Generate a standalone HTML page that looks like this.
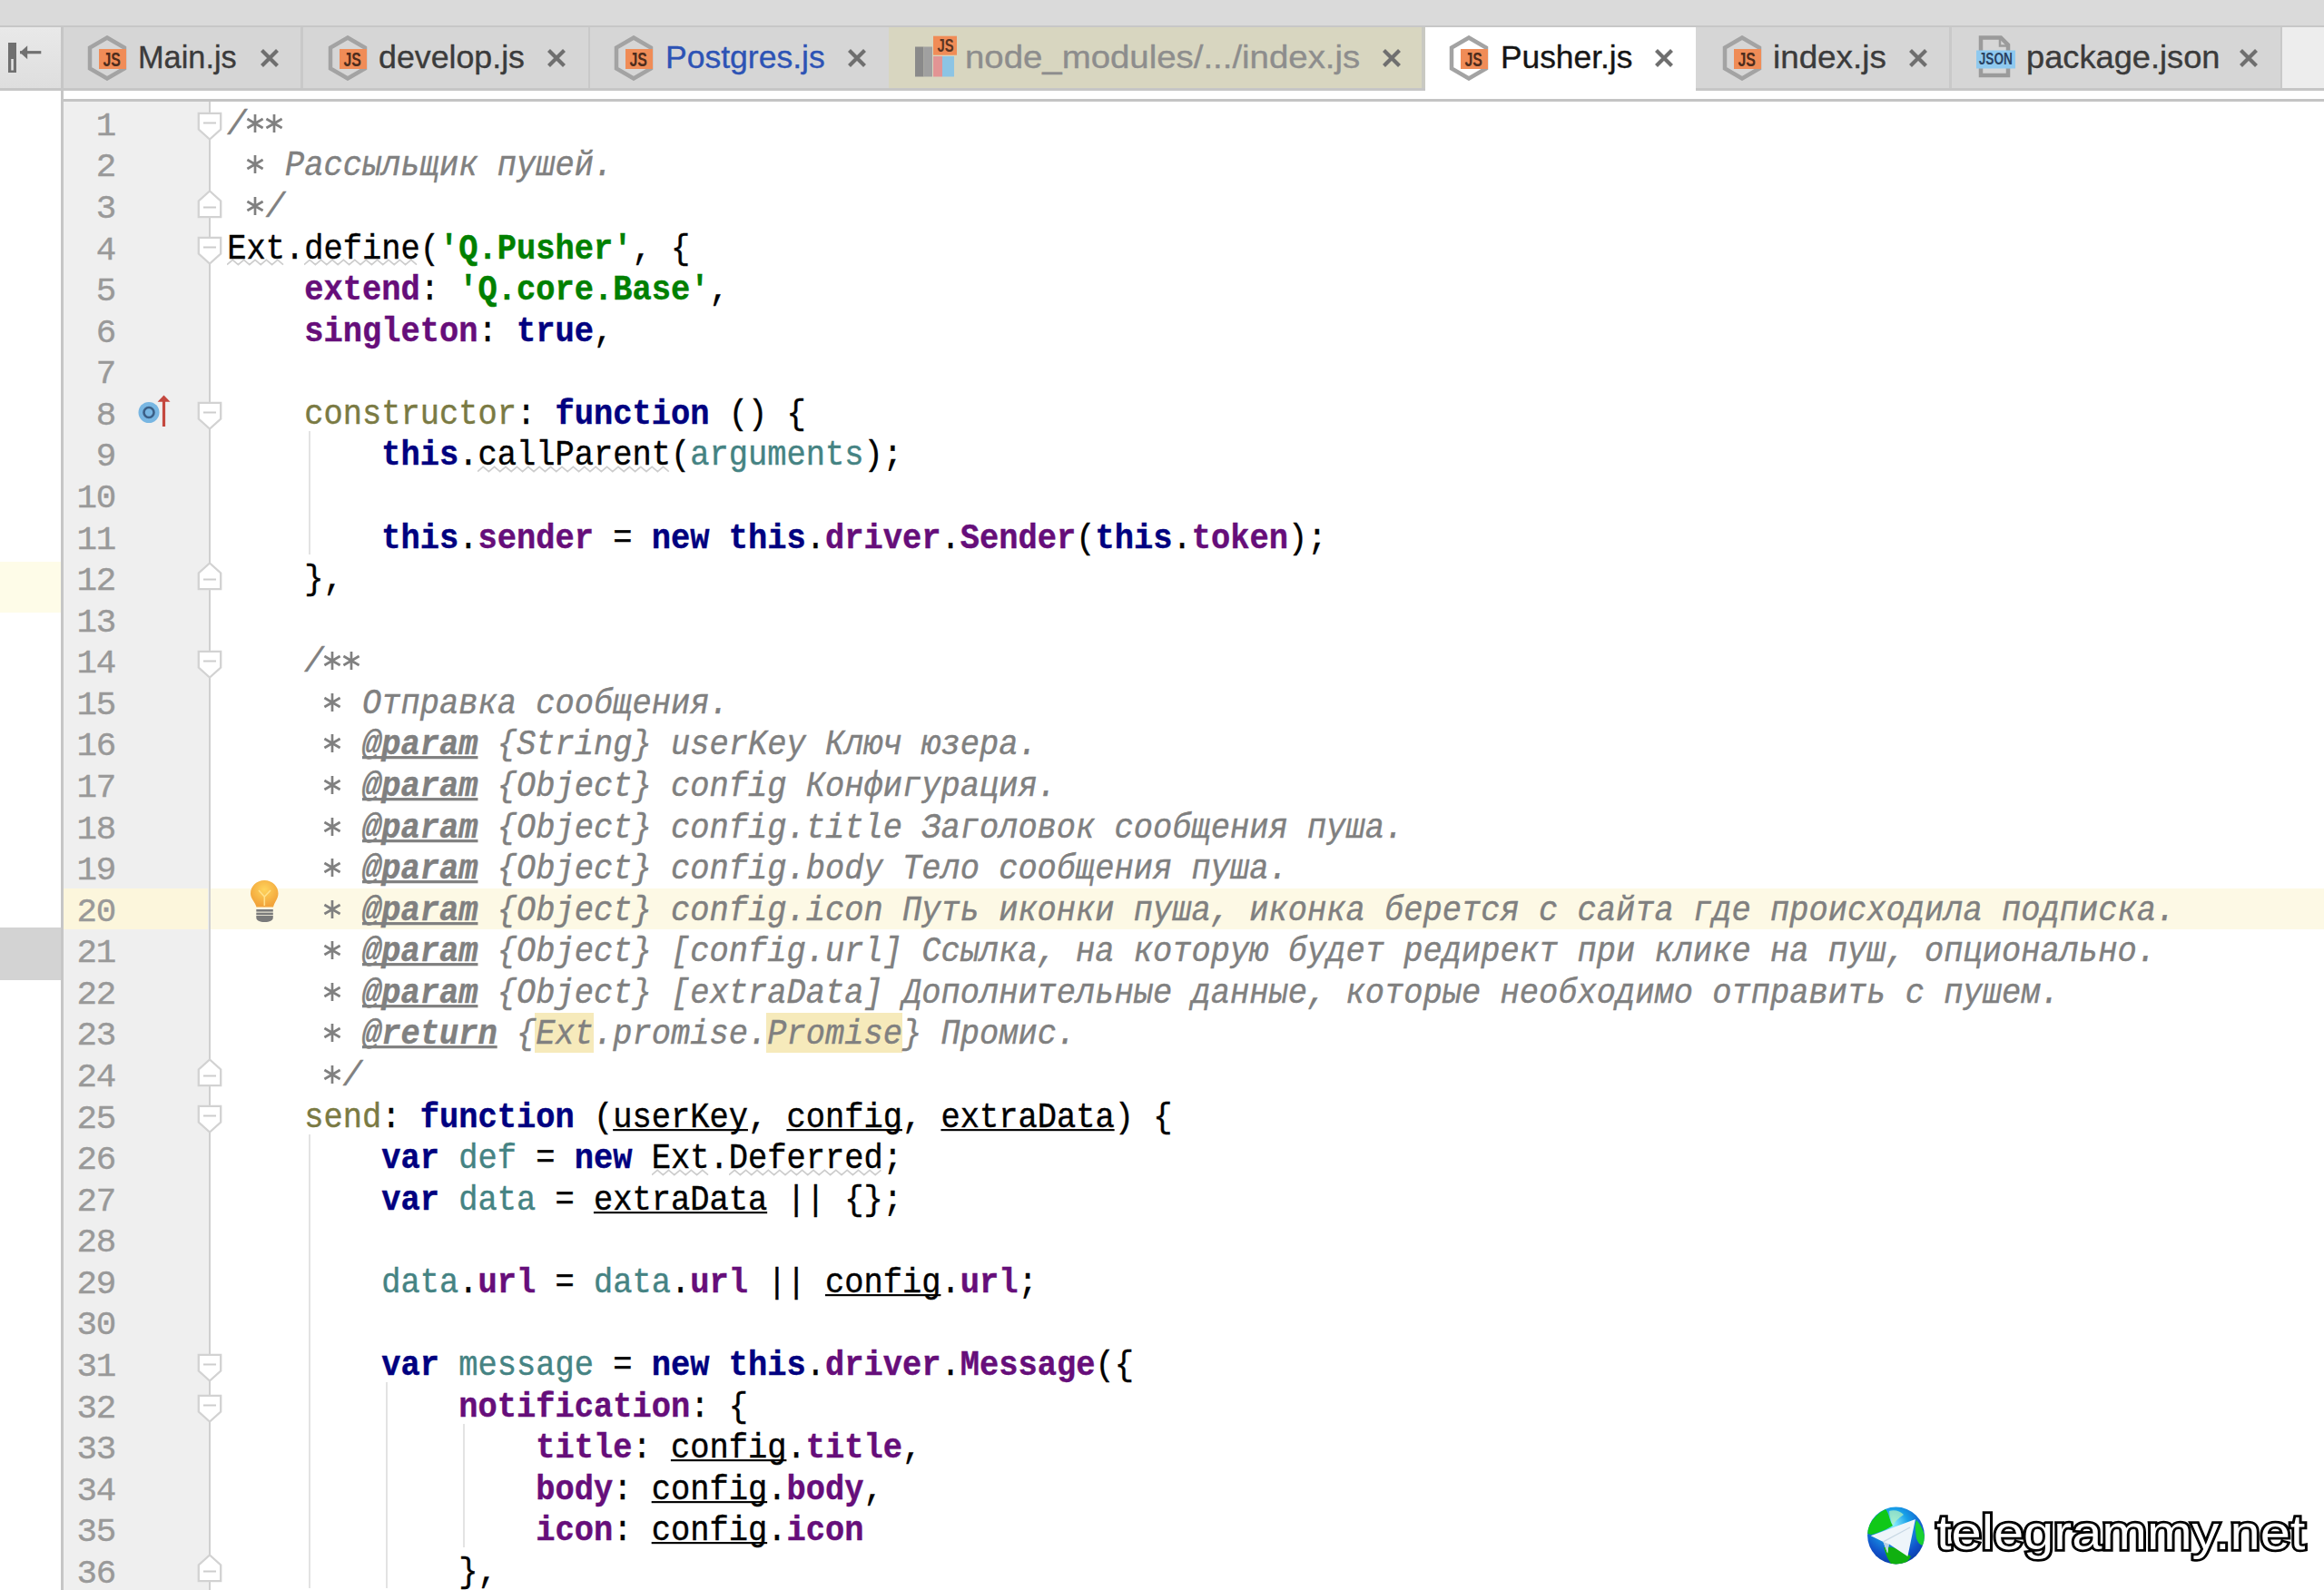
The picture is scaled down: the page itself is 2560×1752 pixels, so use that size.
<!DOCTYPE html><html><head><meta charset="utf-8"><title>Pusher.js</title><style>
*{margin:0;padding:0;box-sizing:border-box}
html,body{width:2560px;height:1752px;overflow:hidden;background:#fff}
body{position:relative;font-family:"Liberation Sans",sans-serif}
.a{position:absolute}
.ln{position:absolute;left:250.2px;height:45.57px;line-height:45.57px;font-family:"Liberation Mono",monospace;font-size:35.4px;letter-spacing:0.01px;white-space:pre;color:#000;transform-origin:0 32.3px;transform:scaleY(1.07);-webkit-text-stroke:0.4px currentColor}
.num{position:absolute;left:70px;width:57px;text-align:right;height:45.57px;line-height:45.57px;font-family:"Liberation Mono",monospace;font-size:37.5px;letter-spacing:-1.25px;color:#999;white-space:pre;-webkit-text-stroke:0.4px currentColor}
.c{color:#808080;font-style:italic}
.ct{color:#808080;font-style:italic;font-weight:bold;text-decoration:underline;text-decoration-thickness:2.5px;text-underline-offset:2.3px;text-decoration-skip-ink:none}
.s{color:#008000;font-weight:bold}
.k{color:#000080;font-weight:bold}
.p{color:#660e7a;font-weight:bold}
.f{color:#7a7a43}
.v{color:#458383}
.u{text-decoration:underline;text-decoration-thickness:2.4px;text-underline-offset:2.3px;text-decoration-skip-ink:none}
.tabt{position:absolute;top:29px;height:68px;line-height:68px;font-size:35px;white-space:pre;transform-origin:0 50%;-webkit-text-stroke:0.35px currentColor}
</style></head><body>
<div class="a" style="left:0;top:0;width:2560px;height:27.5px;background:#dadada"></div>
<div class="a" style="left:0;top:27.5px;width:2560px;height:2.5px;background:#c7c7c7"></div>
<div class="a" style="left:0;top:30px;width:2560px;height:67px;background:#d6d6d6"></div>
<div class="a" style="left:0;top:30px;width:67px;height:67px;background:linear-gradient(#e9e9e9,#dedede)"></div>
<div class="a" style="left:2514px;top:30px;width:46px;height:67px;background:#ededed"></div>
<div class="a" style="left:0;top:97px;width:2560px;height:3px;background:#c6c6c6"></div>
<div class="a" style="left:70px;top:109px;width:2490px;height:3px;background:#c4c4c4"></div>
<div class="a" style="left:67px;top:30px;width:3px;height:1722px;background:#c6c6c6"></div>
<div class="a" style="left:0;top:619px;width:67px;height:56px;background:#fefce8"></div>
<div class="a" style="left:0;top:1022px;width:67px;height:58px;background:#d3d3d3"></div>
<div class="a" style="left:70px;top:112px;width:159.5px;height:1640px;background:#efefef"></div>
<div class="a" style="left:70px;top:978.53px;width:158.5px;height:45.57px;background:#fcf6dc"></div>
<div class="a" style="left:232px;top:978.53px;width:2328px;height:45.57px;background:#fdf9e5"></div>
<div class="a" style="left:229.5px;top:112px;width:2.5px;height:1640px;background:#d0d0d0"></div>
<div class="a" style="left:331px;top:30px;width:2.5px;height:67px;background:#c9c9c9"></div>
<div class="a" style="left:647.5px;top:30px;width:2.5px;height:67px;background:#c9c9c9"></div>
<div class="a" style="left:2147px;top:30px;width:2.5px;height:67px;background:#c9c9c9"></div>
<div class="a" style="left:2511.5px;top:30px;width:2.5px;height:67px;background:#c9c9c9"></div>
<div class="a" style="left:979px;top:30px;width:591px;height:67px;background:#d8d6c0"></div>
<div class="a" style="left:1566px;top:30px;width:3.5px;height:67px;background:#c9c9c2"></div>
<div class="a" style="left:1569.5px;top:30px;width:298px;height:79px;background:#fff"></div>
<svg class="a" style="left:6px;top:44px" width="44" height="40" viewBox="0 0 44 40"><rect x="3" y="3" width="9" height="33" fill="#707070"/><rect x="6.3" y="21" width="2.5" height="12.5" fill="#e6e6e6"/><path d="M16 13.7 H39.3" stroke="#707070" stroke-width="3.2"/><path d="M16 13.7 L24.2 6.2 L24.2 21.2 Z" fill="#707070"/></svg>
<svg class="a" style="left:96.25px;top:38.5px" width="46" height="50" viewBox="0 0 46 50"><polygon points="22,2.5 41,13.5 41,36.5 22,47.5 3,36.5 3,13.5" fill="none" stroke="#a3a3a3" stroke-width="4.5"/><rect x="13" y="15" width="30" height="22" fill="#f08c57"/><text transform="translate(27.2 33.8) scale(0.74 1)" x="0" y="0" text-anchor="middle" font-family="Liberation Sans" font-weight="bold" font-size="21.5" fill="#4e2c1c">JS</text></svg>
<div class="tabt" style="left:152.25px;color:#3b3b3b;transform:scaleX(0.9805)">Main.js</div>
<svg class="a" style="left:286px;top:52.5px" width="22" height="22" viewBox="0 0 22 22"><path d="M2.5 2.5 L19.5 19.5 M19.5 2.5 L2.5 19.5" stroke="#6f6f6f" stroke-width="4.2" stroke-linecap="butt"/></svg>
<svg class="a" style="left:360.85px;top:38.5px" width="46" height="50" viewBox="0 0 46 50"><polygon points="22,2.5 41,13.5 41,36.5 22,47.5 3,36.5 3,13.5" fill="none" stroke="#a3a3a3" stroke-width="4.5"/><rect x="13" y="15" width="30" height="22" fill="#f08c57"/><text transform="translate(27.2 33.8) scale(0.74 1)" x="0" y="0" text-anchor="middle" font-family="Liberation Sans" font-weight="bold" font-size="21.5" fill="#4e2c1c">JS</text></svg>
<div class="tabt" style="left:416.97px;color:#3b3b3b;transform:scaleX(1.0213)">develop.js</div>
<svg class="a" style="left:602px;top:52.5px" width="22" height="22" viewBox="0 0 22 22"><path d="M2.5 2.5 L19.5 19.5 M19.5 2.5 L2.5 19.5" stroke="#6f6f6f" stroke-width="4.2" stroke-linecap="butt"/></svg>
<svg class="a" style="left:676.25px;top:38.5px" width="46" height="50" viewBox="0 0 46 50"><polygon points="22,2.5 41,13.5 41,36.5 22,47.5 3,36.5 3,13.5" fill="none" stroke="#a3a3a3" stroke-width="4.5"/><rect x="13" y="15" width="30" height="22" fill="#f08c57"/><text transform="translate(27.2 33.8) scale(0.74 1)" x="0" y="0" text-anchor="middle" font-family="Liberation Sans" font-weight="bold" font-size="21.5" fill="#4e2c1c">JS</text></svg>
<div class="tabt" style="left:732.96px;color:#2d53b5;transform:scaleX(1.0148)">Postgres.js</div>
<svg class="a" style="left:933px;top:52.5px" width="22" height="22" viewBox="0 0 22 22"><path d="M2.5 2.5 L19.5 19.5 M19.5 2.5 L2.5 19.5" stroke="#6f6f6f" stroke-width="4.2" stroke-linecap="butt"/></svg>
<div class="tabt" style="left:1062.96px;color:#8d8d8d;transform:scaleX(1.0965)">node_modules/.../index.js</div>
<svg class="a" style="left:1521.5px;top:52.5px" width="22" height="22" viewBox="0 0 22 22"><path d="M2.5 2.5 L19.5 19.5 M19.5 2.5 L2.5 19.5" stroke="#6f6f6f" stroke-width="4.2" stroke-linecap="butt"/></svg>
<svg class="a" style="left:1596.25px;top:38.5px" width="46" height="50" viewBox="0 0 46 50"><polygon points="22,2.5 41,13.5 41,36.5 22,47.5 3,36.5 3,13.5" fill="none" stroke="#a3a3a3" stroke-width="4.5"/><rect x="13" y="15" width="30" height="22" fill="#f08c57"/><text transform="translate(27.2 33.8) scale(0.74 1)" x="0" y="0" text-anchor="middle" font-family="Liberation Sans" font-weight="bold" font-size="21.5" fill="#4e2c1c">JS</text></svg>
<div class="tabt" style="left:1652.57px;color:#151515;transform:scaleX(1.0093)">Pusher.js</div>
<svg class="a" style="left:1822px;top:52.5px" width="22" height="22" viewBox="0 0 22 22"><path d="M2.5 2.5 L19.5 19.5 M19.5 2.5 L2.5 19.5" stroke="#6f6f6f" stroke-width="4.2" stroke-linecap="butt"/></svg>
<svg class="a" style="left:1896.85px;top:38.5px" width="46" height="50" viewBox="0 0 46 50"><polygon points="22,2.5 41,13.5 41,36.5 22,47.5 3,36.5 3,13.5" fill="none" stroke="#a3a3a3" stroke-width="4.5"/><rect x="13" y="15" width="30" height="22" fill="#f08c57"/><text transform="translate(27.2 33.8) scale(0.74 1)" x="0" y="0" text-anchor="middle" font-family="Liberation Sans" font-weight="bold" font-size="21.5" fill="#4e2c1c">JS</text></svg>
<div class="tabt" style="left:1953.09px;color:#3b3b3b;transform:scaleX(1.0517)">index.js</div>
<svg class="a" style="left:2102px;top:52.5px" width="22" height="22" viewBox="0 0 22 22"><path d="M2.5 2.5 L19.5 19.5 M19.5 2.5 L2.5 19.5" stroke="#6f6f6f" stroke-width="4.2" stroke-linecap="butt"/></svg>
<div class="tabt" style="left:2231.95px;color:#3b3b3b;transform:scaleX(1.0350)">package.json</div>
<svg class="a" style="left:2466px;top:52.5px" width="22" height="22" viewBox="0 0 22 22"><path d="M2.5 2.5 L19.5 19.5 M19.5 2.5 L2.5 19.5" stroke="#6f6f6f" stroke-width="4.2" stroke-linecap="butt"/></svg>
<svg class="a" style="left:1007px;top:39px" width="50" height="48" viewBox="0 0 50 48"><rect x="1" y="12.5" width="9.5" height="33" fill="#8a8a8a"/><rect x="10.5" y="12.5" width="9.5" height="33" fill="#a0a0a0"/><rect x="21" y="23" width="10" height="22.5" fill="#e29494"/><rect x="31" y="23" width="13" height="22.5" fill="#8cc4e4"/><rect x="21" y="0.7" width="26" height="21" fill="#f08c57"/><text transform="translate(34.5 17.8) scale(0.74 1)" text-anchor="middle" font-family="Liberation Sans" font-weight="bold" font-size="20" fill="#5a3422">JS</text></svg>
<svg class="a" style="left:2176px;top:39px" width="46" height="48" viewBox="0 0 46 48"><path d="M6 2.5 H28 L36 10.5 V44 H6 Z" fill="none" stroke="#9b9b9b" stroke-width="4.5"/><path d="M27 2 V11.5 H36" fill="none" stroke="#9b9b9b" stroke-width="2.5"/><rect x="1" y="16.5" width="43" height="20" fill="#8fc9ef"/><text transform="translate(22.3 32.3) scale(0.72 1)" text-anchor="middle" font-family="Liberation Sans" font-weight="bold" font-size="19" fill="#2a4262">JSON</text></svg>
<div class="num" style="top:116.90px">1</div>
<div class="num" style="top:162.47px">2</div>
<div class="num" style="top:208.04px">3</div>
<div class="num" style="top:253.61px">4</div>
<div class="num" style="top:299.18px">5</div>
<div class="num" style="top:344.75px">6</div>
<div class="num" style="top:390.32px">7</div>
<div class="num" style="top:435.89px">8</div>
<div class="num" style="top:481.46px">9</div>
<div class="num" style="top:527.03px">10</div>
<div class="num" style="top:572.60px">11</div>
<div class="num" style="top:618.17px">12</div>
<div class="num" style="top:663.74px">13</div>
<div class="num" style="top:709.31px">14</div>
<div class="num" style="top:754.88px">15</div>
<div class="num" style="top:800.45px">16</div>
<div class="num" style="top:846.02px">17</div>
<div class="num" style="top:891.59px">18</div>
<div class="num" style="top:937.16px">19</div>
<div class="num" style="top:982.73px">20</div>
<div class="num" style="top:1028.30px">21</div>
<div class="num" style="top:1073.87px">22</div>
<div class="num" style="top:1119.44px">23</div>
<div class="num" style="top:1165.01px">24</div>
<div class="num" style="top:1210.58px">25</div>
<div class="num" style="top:1256.15px">26</div>
<div class="num" style="top:1301.72px">27</div>
<div class="num" style="top:1347.29px">28</div>
<div class="num" style="top:1392.86px">29</div>
<div class="num" style="top:1438.43px">30</div>
<div class="num" style="top:1484.00px">31</div>
<div class="num" style="top:1529.57px">32</div>
<div class="num" style="top:1575.14px">33</div>
<div class="num" style="top:1620.71px">34</div>
<div class="num" style="top:1666.28px">35</div>
<div class="num" style="top:1711.85px">36</div>
<div class="a" style="left:339.99px;top:475.26px;width:2.5px;height:135.71px;background:#e3e3e3"></div>
<div class="a" style="left:339.99px;top:1249.95px;width:2.5px;height:500.27px;background:#e3e3e3"></div>
<div class="a" style="left:424.98px;top:1523.37px;width:2.5px;height:226.85px;background:#e3e3e3"></div>
<div class="a" style="left:509.98px;top:1568.94px;width:2.5px;height:135.71px;background:#e3e3e3"></div>
<div class="a" style="left:589.17px;top:1115.74px;width:64.74px;height:44.07px;background:#f6eabb"></div>
<div class="a" style="left:844.14px;top:1115.74px;width:149.74px;height:44.07px;background:#f6eabb"></div>
<svg class="a" style="left:217px;top:123.49px" width="28" height="33" viewBox="0 0 28 33"><path d="M1.8 1.8 H26.2 V19.5 L14 30.5 L1.8 19.5 Z" fill="#fff" stroke="#d2d2d2" stroke-width="2.3"/><path d="M7 12.5 H21" stroke="#cdcdcd" stroke-width="2"/></svg>
<svg class="a" style="left:217px;top:260.20px" width="28" height="33" viewBox="0 0 28 33"><path d="M1.8 1.8 H26.2 V19.5 L14 30.5 L1.8 19.5 Z" fill="#fff" stroke="#d2d2d2" stroke-width="2.3"/><path d="M7 12.5 H21" stroke="#cdcdcd" stroke-width="2"/></svg>
<svg class="a" style="left:217px;top:442.48px" width="28" height="33" viewBox="0 0 28 33"><path d="M1.8 1.8 H26.2 V19.5 L14 30.5 L1.8 19.5 Z" fill="#fff" stroke="#d2d2d2" stroke-width="2.3"/><path d="M7 12.5 H21" stroke="#cdcdcd" stroke-width="2"/></svg>
<svg class="a" style="left:217px;top:715.89px" width="28" height="33" viewBox="0 0 28 33"><path d="M1.8 1.8 H26.2 V19.5 L14 30.5 L1.8 19.5 Z" fill="#fff" stroke="#d2d2d2" stroke-width="2.3"/><path d="M7 12.5 H21" stroke="#cdcdcd" stroke-width="2"/></svg>
<svg class="a" style="left:217px;top:1217.17px" width="28" height="33" viewBox="0 0 28 33"><path d="M1.8 1.8 H26.2 V19.5 L14 30.5 L1.8 19.5 Z" fill="#fff" stroke="#d2d2d2" stroke-width="2.3"/><path d="M7 12.5 H21" stroke="#cdcdcd" stroke-width="2"/></svg>
<svg class="a" style="left:217px;top:1490.59px" width="28" height="33" viewBox="0 0 28 33"><path d="M1.8 1.8 H26.2 V19.5 L14 30.5 L1.8 19.5 Z" fill="#fff" stroke="#d2d2d2" stroke-width="2.3"/><path d="M7 12.5 H21" stroke="#cdcdcd" stroke-width="2"/></svg>
<svg class="a" style="left:217px;top:1536.16px" width="28" height="33" viewBox="0 0 28 33"><path d="M1.8 1.8 H26.2 V19.5 L14 30.5 L1.8 19.5 Z" fill="#fff" stroke="#d2d2d2" stroke-width="2.3"/><path d="M7 12.5 H21" stroke="#cdcdcd" stroke-width="2"/></svg>
<svg class="a" style="left:217px;top:207.62px" width="28" height="33" viewBox="0 0 28 33"><path d="M1.8 31.2 H26.2 V13.5 L14 2.5 L1.8 13.5 Z" fill="#fff" stroke="#d2d2d2" stroke-width="2.3"/><path d="M7 20.5 H21" stroke="#cdcdcd" stroke-width="2"/></svg>
<svg class="a" style="left:217px;top:617.75px" width="28" height="33" viewBox="0 0 28 33"><path d="M1.8 31.2 H26.2 V13.5 L14 2.5 L1.8 13.5 Z" fill="#fff" stroke="#d2d2d2" stroke-width="2.3"/><path d="M7 20.5 H21" stroke="#cdcdcd" stroke-width="2"/></svg>
<svg class="a" style="left:217px;top:1164.60px" width="28" height="33" viewBox="0 0 28 33"><path d="M1.8 31.2 H26.2 V13.5 L14 2.5 L1.8 13.5 Z" fill="#fff" stroke="#d2d2d2" stroke-width="2.3"/><path d="M7 20.5 H21" stroke="#cdcdcd" stroke-width="2"/></svg>
<svg class="a" style="left:217px;top:1711.44px" width="28" height="33" viewBox="0 0 28 33"><path d="M1.8 31.2 H26.2 V13.5 L14 2.5 L1.8 13.5 Z" fill="#fff" stroke="#d2d2d2" stroke-width="2.3"/><path d="M7 20.5 H21" stroke="#cdcdcd" stroke-width="2"/></svg>
<svg class="a" style="left:148px;top:432.48px" width="44" height="40" viewBox="0 0 44 40"><circle cx="16" cy="22.5" r="11.5" fill="#78b6e2"/><circle cx="16" cy="22.5" r="5.5" fill="none" stroke="#3c5f86" stroke-width="2.6"/><path d="M32.5 10 V38" stroke="#c4483f" stroke-width="3.2"/><path d="M25.6 10.7 L32.5 3.5 L39.5 10.7 Z" fill="#c4483f"/></svg>
<svg class="a" style="left:274px;top:968px" width="36" height="50" viewBox="0 0 36 50"><defs><radialGradient id="bulb" cx="0.5" cy="0.35" r="0.6"><stop offset="0" stop-color="#ffd45c"/><stop offset="1" stop-color="#f2a43a"/></radialGradient></defs><path d="M17.3 2 C26 2 32.5 8.5 32.5 16.5 C32.5 22.5 28.5 25.5 27 31.5 L8.5 31.5 C7 25.5 2 22.5 2 16.5 C2 8.5 8.5 2 17.3 2 Z" fill="url(#bulb)"/><path d="M11 13 L17.3 20 L24 13 M17.3 20 V30" stroke="#ffe08a" stroke-width="1.6" fill="none"/><rect x="8.3" y="34" width="18.5" height="2.6" fill="#7a7a7a"/><rect x="8.3" y="37.6" width="18.5" height="2.6" fill="#7a7a7a"/><path d="M8.3 41 H26.8 V43 C26.8 46.5 23 48 17.5 48 C12 48 8.3 46.5 8.3 43 Z" fill="#7a7a7a"/></svg>
<svg class="a" style="left:250.20px;top:285.21px" width="67.74" height="9"><polyline points="0.00,6.60 6.20,1.40 12.40,6.60 18.60,1.40 24.80,6.60 31.00,1.40 37.20,6.60 43.40,1.40 49.60,6.60 55.80,1.40 62.00,6.60" fill="none" stroke="#cdcdcd" stroke-width="1.7"/></svg>
<svg class="a" style="left:335.19px;top:285.21px" width="131.49" height="9"><polyline points="0.00,6.60 6.20,1.40 12.40,6.60 18.60,1.40 24.80,6.60 31.00,1.40 37.20,6.60 43.40,1.40 49.60,6.60 55.80,1.40 62.00,6.60 68.20,1.40 74.40,6.60 80.60,1.40 86.80,6.60 93.00,1.40 99.20,6.60 105.40,1.40 111.60,6.60 117.80,1.40 124.00,6.60" fill="none" stroke="#cdcdcd" stroke-width="1.7"/></svg>
<svg class="a" style="left:526.42px;top:513.06px" width="216.48" height="9"><polyline points="0.00,6.60 6.20,1.40 12.40,6.60 18.60,1.40 24.80,6.60 31.00,1.40 37.20,6.60 43.40,1.40 49.60,6.60 55.80,1.40 62.00,6.60 68.20,1.40 74.40,6.60 80.60,1.40 86.80,6.60 93.00,1.40 99.20,6.60 105.40,1.40 111.60,6.60 117.80,1.40 124.00,6.60 130.20,1.40 136.40,6.60 142.60,1.40 148.80,6.60 155.00,1.40 161.20,6.60 167.40,1.40 173.60,6.60 179.80,1.40 186.00,6.60 192.20,1.40 198.40,6.60 204.60,1.40 210.80,6.60" fill="none" stroke="#cdcdcd" stroke-width="1.7"/></svg>
<svg class="a" style="left:717.66px;top:1287.75px" width="67.74" height="9"><polyline points="0.00,6.60 6.20,1.40 12.40,6.60 18.60,1.40 24.80,6.60 31.00,1.40 37.20,6.60 43.40,1.40 49.60,6.60 55.80,1.40 62.00,6.60" fill="none" stroke="#cdcdcd" stroke-width="1.7"/></svg>
<svg class="a" style="left:802.65px;top:1287.75px" width="173.98" height="9"><polyline points="0.00,6.60 6.20,1.40 12.40,6.60 18.60,1.40 24.80,6.60 31.00,1.40 37.20,6.60 43.40,1.40 49.60,6.60 55.80,1.40 62.00,6.60 68.20,1.40 74.40,6.60 80.60,1.40 86.80,6.60 93.00,1.40 99.20,6.60 105.40,1.40 111.60,6.60 117.80,1.40 124.00,6.60 130.20,1.40 136.40,6.60 142.60,1.40 148.80,6.60 155.00,1.40 161.20,6.60 167.40,1.40" fill="none" stroke="#cdcdcd" stroke-width="1.7"/></svg>
<svg class="a" style="left:269.97px;top:124.90px" width="22" height="22" viewBox="-11 -11 22 22"><path d="M0 -10 V10 M-8.6 -5 L8.6 5 M-8.6 5 L8.6 -5" stroke="#808080" stroke-width="2.7"/></svg>
<svg class="a" style="left:291.22px;top:124.90px" width="22" height="22" viewBox="-11 -11 22 22"><path d="M0 -10 V10 M-8.6 -5 L8.6 5 M-8.6 5 L8.6 -5" stroke="#808080" stroke-width="2.7"/></svg>
<div class="ln" style="top:116.90px"><span class="c">/  </span></div>
<svg class="a" style="left:269.97px;top:170.47px" width="22" height="22" viewBox="-11 -11 22 22"><path d="M0 -10 V10 M-8.6 -5 L8.6 5 M-8.6 5 L8.6 -5" stroke="#808080" stroke-width="2.7"/></svg>
<div class="ln" style="top:162.47px"><span class="c">   Рассыльщик пушей.</span></div>
<svg class="a" style="left:269.97px;top:216.04px" width="22" height="22" viewBox="-11 -11 22 22"><path d="M0 -10 V10 M-8.6 -5 L8.6 5 M-8.6 5 L8.6 -5" stroke="#808080" stroke-width="2.7"/></svg>
<div class="ln" style="top:208.04px"><span class="c">  /</span></div>
<div class="ln" style="top:253.61px">Ext.define(<span class="s">&#x27;Q.Pusher&#x27;</span>, {</div>
<div class="ln" style="top:299.18px">    <span class="p">extend</span>: <span class="s">&#x27;Q.core.Base&#x27;</span>,</div>
<div class="ln" style="top:344.75px">    <span class="p">singleton</span>: <span class="k">true</span>,</div>
<div class="ln" style="top:435.89px">    <span class="f">constructor</span>: <span class="k">function</span> () {</div>
<div class="ln" style="top:481.46px">        <span class="k">this</span>.callParent(<span class="v">arguments</span>);</div>
<div class="ln" style="top:572.60px">        <span class="k">this</span>.<span class="p">sender</span> = <span class="k">new</span> <span class="k">this</span>.<span class="p">driver</span>.<span class="p">Sender</span>(<span class="k">this</span>.<span class="p">token</span>);</div>
<div class="ln" style="top:618.17px">    },</div>
<svg class="a" style="left:354.96px;top:717.31px" width="22" height="22" viewBox="-11 -11 22 22"><path d="M0 -10 V10 M-8.6 -5 L8.6 5 M-8.6 5 L8.6 -5" stroke="#808080" stroke-width="2.7"/></svg>
<svg class="a" style="left:376.21px;top:717.31px" width="22" height="22" viewBox="-11 -11 22 22"><path d="M0 -10 V10 M-8.6 -5 L8.6 5 M-8.6 5 L8.6 -5" stroke="#808080" stroke-width="2.7"/></svg>
<div class="ln" style="top:709.31px"><span class="c">    /  </span></div>
<svg class="a" style="left:354.96px;top:762.88px" width="22" height="22" viewBox="-11 -11 22 22"><path d="M0 -10 V10 M-8.6 -5 L8.6 5 M-8.6 5 L8.6 -5" stroke="#808080" stroke-width="2.7"/></svg>
<div class="ln" style="top:754.88px"><span class="c">       Отправка сообщения.</span></div>
<svg class="a" style="left:354.96px;top:808.45px" width="22" height="22" viewBox="-11 -11 22 22"><path d="M0 -10 V10 M-8.6 -5 L8.6 5 M-8.6 5 L8.6 -5" stroke="#808080" stroke-width="2.7"/></svg>
<div class="ln" style="top:800.45px"><span class="c">       </span><span class="ct">@param</span><span class="c"> {String} userKey Ключ юзера.</span></div>
<svg class="a" style="left:354.96px;top:854.02px" width="22" height="22" viewBox="-11 -11 22 22"><path d="M0 -10 V10 M-8.6 -5 L8.6 5 M-8.6 5 L8.6 -5" stroke="#808080" stroke-width="2.7"/></svg>
<div class="ln" style="top:846.02px"><span class="c">       </span><span class="ct">@param</span><span class="c"> {Object} config Конфигурация.</span></div>
<svg class="a" style="left:354.96px;top:899.59px" width="22" height="22" viewBox="-11 -11 22 22"><path d="M0 -10 V10 M-8.6 -5 L8.6 5 M-8.6 5 L8.6 -5" stroke="#808080" stroke-width="2.7"/></svg>
<div class="ln" style="top:891.59px"><span class="c">       </span><span class="ct">@param</span><span class="c"> {Object} config.title Заголовок сообщения пуша.</span></div>
<svg class="a" style="left:354.96px;top:945.16px" width="22" height="22" viewBox="-11 -11 22 22"><path d="M0 -10 V10 M-8.6 -5 L8.6 5 M-8.6 5 L8.6 -5" stroke="#808080" stroke-width="2.7"/></svg>
<div class="ln" style="top:937.16px"><span class="c">       </span><span class="ct">@param</span><span class="c"> {Object} config.body Тело сообщения пуша.</span></div>
<svg class="a" style="left:354.96px;top:990.73px" width="22" height="22" viewBox="-11 -11 22 22"><path d="M0 -10 V10 M-8.6 -5 L8.6 5 M-8.6 5 L8.6 -5" stroke="#808080" stroke-width="2.7"/></svg>
<div class="ln" style="top:982.73px"><span class="c">       </span><span class="ct">@param</span><span class="c"> {Object} config.icon Путь иконки пуша, иконка берется с сайта где происходила подписка.</span></div>
<svg class="a" style="left:354.96px;top:1036.30px" width="22" height="22" viewBox="-11 -11 22 22"><path d="M0 -10 V10 M-8.6 -5 L8.6 5 M-8.6 5 L8.6 -5" stroke="#808080" stroke-width="2.7"/></svg>
<div class="ln" style="top:1028.30px"><span class="c">       </span><span class="ct">@param</span><span class="c"> {Object} [config.url] Ссылка, на которую будет редирект при клике на пуш, опционально.</span></div>
<svg class="a" style="left:354.96px;top:1081.87px" width="22" height="22" viewBox="-11 -11 22 22"><path d="M0 -10 V10 M-8.6 -5 L8.6 5 M-8.6 5 L8.6 -5" stroke="#808080" stroke-width="2.7"/></svg>
<div class="ln" style="top:1073.87px"><span class="c">       </span><span class="ct">@param</span><span class="c"> {Object} [extraData] Дополнительные данные, которые необходимо отправить с пушем.</span></div>
<svg class="a" style="left:354.96px;top:1127.44px" width="22" height="22" viewBox="-11 -11 22 22"><path d="M0 -10 V10 M-8.6 -5 L8.6 5 M-8.6 5 L8.6 -5" stroke="#808080" stroke-width="2.7"/></svg>
<div class="ln" style="top:1119.44px"><span class="c">       </span><span class="ct">@return</span><span class="c"> {Ext.promise.Promise} Промис.</span></div>
<svg class="a" style="left:354.96px;top:1173.01px" width="22" height="22" viewBox="-11 -11 22 22"><path d="M0 -10 V10 M-8.6 -5 L8.6 5 M-8.6 5 L8.6 -5" stroke="#808080" stroke-width="2.7"/></svg>
<div class="ln" style="top:1165.01px"><span class="c">      /</span></div>
<div class="ln" style="top:1210.58px">    <span class="f">send</span>: <span class="k">function</span> (<span class="u">userKey</span>, <span class="u">config</span>, <span class="u">extraData</span>) {</div>
<div class="ln" style="top:1256.15px">        <span class="k">var</span> <span class="v">def</span> = <span class="k">new</span> Ext.Deferred;</div>
<div class="ln" style="top:1301.72px">        <span class="k">var</span> <span class="v">data</span> = <span class="u">extraData</span> || {};</div>
<div class="ln" style="top:1392.86px">        <span class="v">data</span>.<span class="p">url</span> = <span class="v">data</span>.<span class="p">url</span> || <span class="u">config</span>.<span class="p">url</span>;</div>
<div class="ln" style="top:1484.00px">        <span class="k">var</span> <span class="v">message</span> = <span class="k">new</span> <span class="k">this</span>.<span class="p">driver</span>.<span class="p">Message</span>({</div>
<div class="ln" style="top:1529.57px">            <span class="p">notification</span>: {</div>
<div class="ln" style="top:1575.14px">                <span class="p">title</span>: <span class="u">config</span>.<span class="p">title</span>,</div>
<div class="ln" style="top:1620.71px">                <span class="p">body</span>: <span class="u">config</span>.<span class="p">body</span>,</div>
<div class="ln" style="top:1666.28px">                <span class="p">icon</span>: <span class="u">config</span>.<span class="p">icon</span></div>
<div class="ln" style="top:1711.85px">            },</div>
<svg class="a" style="left:2055px;top:1659px" width="68" height="68" viewBox="0 0 68 68"><defs><radialGradient id="gl" cx="0.45" cy="0.3" r="0.75"><stop offset="0" stop-color="#8ff0ff"/><stop offset="0.35" stop-color="#18a0e8"/><stop offset="0.75" stop-color="#1050c8"/><stop offset="1" stop-color="#0a3aa0"/></radialGradient><clipPath id="gc"><circle cx="33.5" cy="33" r="31.4"/></clipPath></defs><circle cx="33.5" cy="33" r="31.4" fill="url(#gl)"/><g clip-path="url(#gc)"><path d="M0 30 C4 20 10 10 22 4 C26 8 26 16 30 22 C24 26 14 30 6 32 Z" fill="#10c818"/><path d="M26 6 C32 4 38 6 42 10 C36 14 32 18 30 22 C28 16 26 10 26 6 Z" fill="#b0f0c0" opacity="0.75"/><path d="M56 16 C62 22 66 32 66 42 C62 46 58 42 56 36 C55 28 54 22 56 16 Z" fill="#18d030"/><path d="M20 46 C28 44 40 48 50 56 C46 64 38 68 30 66 C24 60 22 52 20 46 Z" fill="#10b010"/></g><path d="M5.8 33.3 L54.9 14.9 L46.4 55.9 L25.7 42.2 L24.2 52.6 L19.5 39.9 Z" fill="#eef5fa"/><path d="M19.5 39.9 L25.7 42.2 L24.2 52.6 Z" fill="#b9d2e2"/><path d="M19.5 39.9 L49 24" stroke="#c8d8e4" stroke-width="1.2"/></svg>
<div class="a" style="left:2133px;top:1648px;height:80px;line-height:80px;font-size:54px;color:#fff;-webkit-text-stroke:5.5px #000;paint-order:stroke fill;white-space:pre;transform-origin:0 50%;transform:scaleX(1.104)">telegrammy.net</div>
</body></html>
